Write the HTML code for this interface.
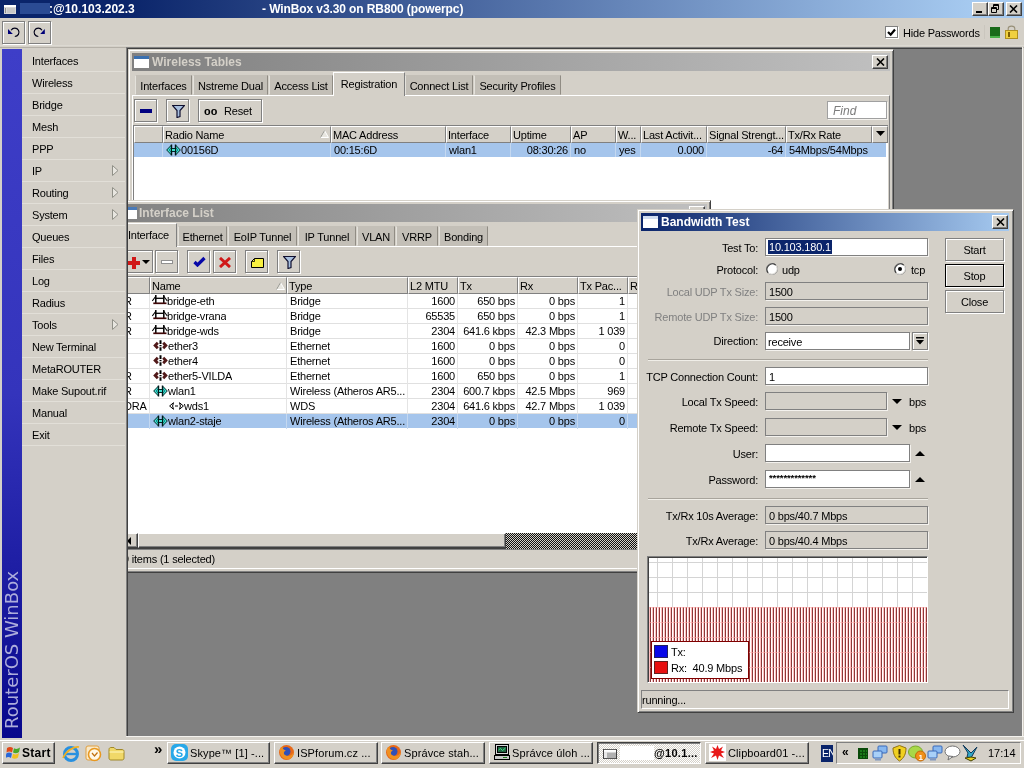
<!DOCTYPE html><html><head><meta charset="utf-8"><title>WinBox</title><style>
*{box-sizing:border-box;margin:0;padding:0}
html,body{width:1024px;height:768px;overflow:hidden}
body{position:relative;background:#d4d0c8;font-family:"Liberation Sans",sans-serif;font-size:11px;letter-spacing:-0.2px;color:#000;line-height:14px}
.a{position:absolute}
.t{position:absolute;white-space:nowrap;line-height:14px;height:14px}
.b{font-weight:bold}
.btn{position:absolute;background:#d4d0c8;border:1px solid #808080;box-shadow:inset 1px 1px 0 #fff,1px 1px 0 #fff}
.btn2{position:absolute;background:#d4d0c8;border:1px solid;border-color:#fff #404040 #404040 #fff;box-shadow:inset -1px -1px 0 #808080}
.tb{position:absolute;background:#d4d0c8;border:1px solid #808080;box-shadow:inset 1px 1px 0 #fff,1px 1px 0 #fff}
.win{position:absolute;background:#d4d0c8;border:1px solid;border-color:#d4d0c8 #404040 #404040 #d4d0c8;box-shadow:inset 1px 1px 0 #fff,inset -1px -1px 0 #808080}
.ttl{position:absolute;height:18px;color:#fff;font-weight:bold;font-size:12px;letter-spacing:0}
.ttl.act{background:linear-gradient(to right,#0a246a,#a6caf0)}
.ttl.ina{background:linear-gradient(to right,#808080,#c0c0c0);color:#d4d0c8}
.sunk{position:absolute;border:1px solid;border-color:#808080 #fff #fff #808080;box-shadow:inset 1px 1px 0 #404040,inset -1px -1px 0 #d4d0c8;background:#fff}
.fld{position:absolute;border:1px solid #808080;background:#fff;box-shadow:1px 1px 0 #f4f2ee}
.fld.dis{background:#d4d0c8}
.tab{position:absolute;background:#c3bfb7;border:1px solid;border-color:#c3bfb7 #908c84 transparent #e4e2dc;text-align:center;line-height:20px}
.tab.on{background:#d4d0c8;border-color:#fff #808080 transparent #fff;border-bottom:none;line-height:22px}
.hd{position:absolute;background:#d4d0c8;border:1px solid;border-color:#fff #808080 #808080 #fff;height:17px;line-height:16px;padding-left:1px;white-space:nowrap;overflow:hidden}
.row{position:absolute;height:15px;border-bottom:1px solid #e0e0e0;background:#fff}
.row.sel{background:#a5c5ec;border-bottom-color:#fff;height:15px}
.c{position:absolute;top:0px;height:14px;line-height:14px;white-space:nowrap;overflow:hidden}
.r{text-align:right}
.vl{position:absolute;width:1px;background:#e4e4e4}
.mi{position:absolute;left:22px;width:103px;height:22px;border-bottom:1px solid #e2dfd8;line-height:23px;padding-left:10px}
.arr{position:absolute;left:90px;top:5px}
.lbl{position:absolute;text-align:right;white-space:nowrap;height:14px;line-height:14px}
.gray{color:#808080}
.tsk{position:absolute;top:742px;height:22px;background:#d4d0c8;border:1px solid;border-color:#fff #404040 #404040 #fff;box-shadow:inset -1px -1px 0 #808080;font-size:11px;letter-spacing:0.1px;line-height:19px;white-space:nowrap;overflow:hidden}
</style></head><body><div id="root" style="position:absolute;left:0;top:0;width:1024px;height:768px;will-change:transform"><div class="a" style="left:0;top:0;width:1024px;height:18px;background:linear-gradient(to right,#0a246a 0%,#0a246a 12%,#a6caf0 95%)"></div><svg class="a" style="left:4px;top:5px" width="12" height="9" viewBox="0 0 12 9"><rect x="0" y="0" width="12" height="9" fill="#d8d8d8"/><rect x="0" y="0" width="12" height="2" fill="#fff"/><rect x="3" y="3" width="8" height="5" fill="#c8c8c8"/><rect x="1" y="3" width="1" height="5" fill="#909090"/></svg><div class="a" style="left:20px;top:3px;width:30px;height:11px;background:#2b4b93"></div><div class="t b" style="left:49px;top:2px;font-size:12px;letter-spacing:0;color:#fff">:@10.103.202.3</div><div class="t b" style="left:262px;top:2px;font-size:12px;letter-spacing:-0.1px;color:#fff">- WinBox v3.30 on RB800 (powerpc)</div><div class="btn2" style="left:972px;top:2px;width:16px;height:14px"><div class="a" style="left:3px;top:8px;width:6px;height:2px;background:#000"></div></div><div class="btn2" style="left:988px;top:2px;width:16px;height:14px"><svg class="a" style="left:2px;top:1px" width="10" height="10" viewBox="0 0 10 10"><path d="M2.500,3V0.5H7.500V5.500H6M2.500,1.500H7.500" stroke="#000" fill="none"/><path d="M0.5,3.500H5.500V8.500H0.5ZM0.5,4.500H5.500" stroke="#000" fill="none"/></svg></div><div class="btn2" style="left:1006px;top:2px;width:16px;height:14px"><svg class="a" style="left:2px;top:2px" width="9" height="8" viewBox="0 0 9 8"><path d="M1,0.5L8,7.5M8,0.5L1,7.5" stroke="#000" stroke-width="1.6" fill="none"/></svg></div><div class="btn" style="left:2px;top:21px;width:23px;height:23px"><svg class="a" style="left:3px;top:4px" width="16" height="14" viewBox="0 0 16 14"><path d="M5.160,4.200A4.200,4.200 0 1 1 8.800,10.500" stroke="#000018" stroke-width="1.200" fill="none"/><path d="M2,3V8H6.800Z" fill="#000078"/></svg></div><div class="btn" style="left:28px;top:21px;width:23px;height:23px"><svg class="a" style="left:3px;top:4px" width="16" height="14" viewBox="0 0 16 14"><path d="M9.940,4.200A4.200,4.200 0 1 0 6.300,10.500" stroke="#000018" stroke-width="1.200" fill="none"/><path d="M12.800,3V8H8.200Z" fill="#000078"/></svg></div><div class="a" style="left:885px;top:26px;width:13px;height:12px;background:#fff;border:1px solid #808080;box-shadow:1px 1px 0 #fff"><svg class="a" style="left:1px;top:1px" width="9" height="9" viewBox="0 0 9 9"><path d="M1,4L3.700,6.700L8,1.500" stroke="#000" stroke-width="2.200" fill="none"/></svg></div><div class="t" style="left:903px;top:26px">Hide Passwords</div><div class="a" style="left:984px;top:25px;width:1px;height:14px;background:#cac6be"></div><div class="a" style="left:990px;top:27px;width:10px;height:11px;background:#1a6a1a;border-bottom:2px solid #4ab04a"></div><svg class="a" style="left:1005px;top:24px" width="13" height="15" viewBox="0 0 13 15"><path d="M3.200,7V4.500C3.200,1.300 9.800,1.300 9.800,4.500V7" stroke="#989078" stroke-width="1.100" fill="none"/><rect x="0.5" y="6.500" width="12" height="8" fill="#f0d040" stroke="#b09020"/><rect x="3" y="8" width="2" height="5" fill="#806000"/></svg><div class="a" style="left:0;top:45px;width:1024px;height:1px;background:#dcd9d2"></div><div class="a" style="left:0;top:47px;width:1024px;height:1px;background:#b4b0a8"></div><div class="a" style="left:2px;top:49px;width:20px;height:689px;background:linear-gradient(to bottom,#3e3ec8 0%,#3434bc 50%,#08088c 100%)"></div><div class="a" style="left:2px;top:727px;width:20px;height:1px"></div><div class="a" style="left:1px;top:729px;width:22px;height:160px;transform:rotate(-90deg);transform-origin:0 0;font-family:'DejaVu Sans',sans-serif;font-size:18px;letter-spacing:0;line-height:22px;color:#adaddc;white-space:nowrap">RouterOS WinBox</div><div class="mi" style="top:50px">Interfaces</div><div class="mi" style="top:72px">Wireless</div><div class="mi" style="top:94px">Bridge</div><div class="mi" style="top:116px">Mesh</div><div class="mi" style="top:138px">PPP</div><div class="mi" style="top:160px">IP<svg class="arr" width="7" height="11" viewBox="0 0 7 11"><path d="M0.5,0.5V10.500L6,5.500Z" fill="#e8e6e0" stroke="#909088"/></svg></div><div class="mi" style="top:182px">Routing<svg class="arr" width="7" height="11" viewBox="0 0 7 11"><path d="M0.5,0.5V10.500L6,5.500Z" fill="#e8e6e0" stroke="#909088"/></svg></div><div class="mi" style="top:204px">System<svg class="arr" width="7" height="11" viewBox="0 0 7 11"><path d="M0.5,0.5V10.500L6,5.500Z" fill="#e8e6e0" stroke="#909088"/></svg></div><div class="mi" style="top:226px">Queues</div><div class="mi" style="top:248px">Files</div><div class="mi" style="top:270px">Log</div><div class="mi" style="top:292px">Radius</div><div class="mi" style="top:314px">Tools<svg class="arr" width="7" height="11" viewBox="0 0 7 11"><path d="M0.5,0.5V10.500L6,5.500Z" fill="#e8e6e0" stroke="#909088"/></svg></div><div class="mi" style="top:336px">New Terminal</div><div class="mi" style="top:358px">MetaROUTER</div><div class="mi" style="top:380px">Make Supout.rif</div><div class="mi" style="top:402px">Manual</div><div class="mi" style="top:424px">Exit</div><div class="a" id="mdi" style="left:126px;top:47px;width:896px;height:689px;background:#808080;border-left:1px solid #808080;border-top:1px solid #808080;overflow:hidden;box-shadow:inset 1px 1px 0 #404040"></div><div class="a" style="left:128px;top:49px;width:894px;height:687px;overflow:hidden"><div class="win" style="left:0px;top:0px;width:766px;height:300px"><div class="ttl ina" style="left:3px;top:3px;width:758px"><svg class="a" style="left:1.500px;top:2.500px" width="15" height="12" viewBox="0 0 15 12"><rect x="0" y="0" width="15" height="12" fill="#fff"/><rect x="0" y="0" width="15" height="3" fill="#3a70b0"/></svg><div class="t" style="left:20px;top:2px">Wireless Tables</div></div><div class="btn2" style="left:743px;top:5px;width:16px;height:14px"><svg class="a" style="left:3px;top:2px" width="9" height="8" viewBox="0 0 9 8"><path d="M1,0.5L8,7.5M8,0.5L1,7.5" stroke="#000" stroke-width="1.6" fill="none"/></svg></div><div class="a" style="left:3px;top:45px;width:758px;height:210px;border:1px solid;border-color:#fff #808080 #808080 #fff"></div><div class="tab" style="left:6px;top:25px;width:57px;height:20px">Interfaces</div><div class="tab" style="left:64px;top:25px;width:75px;height:20px">Nstreme Dual</div><div class="tab" style="left:140px;top:25px;width:64px;height:20px">Access List</div><div class="tab on" style="left:204px;top:22px;width:72px;height:24px">Registration</div><div class="tab" style="left:276px;top:25px;width:68px;height:20px">Connect List</div><div class="tab" style="left:345px;top:25px;width:87px;height:20px">Security Profiles</div><div class="tb" style="left:5px;top:49px;width:23px;height:23px"><div class="a" style="left:5px;top:9px;width:12px;height:4px;background:#000080"></div></div><div class="tb" style="left:37px;top:49px;width:23px;height:23px"><svg class="a" style="left:5px;top:4px" width="13" height="14" viewBox="0 0 13 14"><path d="M0.5,1.500H12.500L8,6.500V12.500L5,13.500V6.500Z" fill="#a8c0e0" stroke="#101030" stroke-width="1.2"/></svg></div><div class="tb" style="left:69px;top:49px;width:64px;height:23px"><div class="t b" style="left:5px;top:5px;font-size:9.5px;letter-spacing:0;transform:scaleX(1.27);transform-origin:0 0">00</div><div class="t" style="left:25px;top:4px">Reset</div></div><div class="fld" style="left:698px;top:51px;width:60px;height:18px;border-color:#a0a0a0"><div class="t" style="left:5px;top:2px;font-style:italic;color:#7c7c7c;font-size:12px;letter-spacing:0">Find</div></div><div class="a" style="left:4px;top:75px;width:755px;height:170px;background:#fff;border-left:1px solid #808080;border-top:1px solid #808080"></div><div class="hd" style="left:5px;top:76px;width:29px"></div><div class="hd" style="left:34px;top:76px;width:168px">Radio Name</div><div class="hd" style="left:202px;top:76px;width:115px">MAC Address</div><div class="hd" style="left:317px;top:76px;width:65px">Interface</div><div class="hd" style="left:382px;top:76px;width:60px">Uptime</div><div class="hd" style="left:442px;top:76px;width:45px">AP</div><div class="hd" style="left:487px;top:76px;width:25px">W...</div><div class="hd" style="left:512px;top:76px;width:66px">Last Activit...</div><div class="hd" style="left:578px;top:76px;width:79px">Signal Strengt...</div><div class="hd" style="left:657px;top:76px;width:86px">Tx/Rx Rate</div><div class="hd" style="left:743px;top:76px;width:16px;padding:0"><svg class="a" style="left:3px;top:4px" width="9" height="5" viewBox="0 0 9 5"><path d="M0,0H9L4.500,5Z" fill="#000"/></svg></div><svg class="a" style="left:191px;top:80px" width="9" height="8" viewBox="0 0 9 8"><path d="M0.5,7.500H8.500L4.500,0.5Z" fill="#e8e6e0" stroke="#fff"/><path d="M0.5,7.500L4.500,0.5" stroke="#909088" fill="none"/></svg><div class="row sel" style="left:5px;top:93px;width:752px"><svg class="a" style="left:32px;top:1px" width="15" height="13" viewBox="0 0 15 13"><path d="M0.7,6L5.500,1V11Z" fill="#40e0d0" stroke="#002828" stroke-width="1"/><path d="M14.300,6L9.500,1V11Z" fill="#40e0d0" stroke="#002828" stroke-width="1"/><path d="M3,6L5,4M3,6L5,8M12,6L10,4M12,6L10,8" stroke="#008080" stroke-width="0.8" fill="none"/><path d="M5.500,0.5V11.500M9.500,0.5V11.500" stroke="#001818" stroke-width="1.400"/><rect x="6" y="5" width="3" height="2" fill="#40e0d0"/><path d="M6,4.500H9M6,7.500H9" stroke="#002828" stroke-width="1"/></svg><div class="c" style="left:47px">00156D</div><div class="c" style="left:200px">00:15:6D</div><div class="c" style="left:315px">wlan1</div><div class="c r" style="left:378px;width:56px">08:30:26</div><div class="c" style="left:440px">no</div><div class="c" style="left:485px">yes</div><div class="c r" style="left:508px;width:62px">0.000</div><div class="c r" style="left:574px;width:75px">-64</div><div class="c" style="left:655px">54Mbps/54Mbps</div></div><div class="vl" style="left:33px;top:93px;height:14px;background:#c4d8f0"></div><div class="vl" style="left:201px;top:93px;height:14px;background:#c4d8f0"></div><div class="vl" style="left:316px;top:93px;height:14px;background:#c4d8f0"></div><div class="vl" style="left:381px;top:93px;height:14px;background:#c4d8f0"></div><div class="vl" style="left:441px;top:93px;height:14px;background:#c4d8f0"></div><div class="vl" style="left:486px;top:93px;height:14px;background:#c4d8f0"></div><div class="vl" style="left:511px;top:93px;height:14px;background:#c4d8f0"></div><div class="vl" style="left:577px;top:93px;height:14px;background:#c4d8f0"></div><div class="vl" style="left:656px;top:93px;height:14px;background:#c4d8f0"></div></div><div class="win" style="left:-28px;top:151px;width:611px;height:373px"><div class="ttl ina" style="left:3px;top:3px;width:603px"><svg class="a" style="left:18px;top:3px" width="15" height="12" viewBox="0 0 15 12"><rect x="0" y="0" width="15" height="12" fill="#fff"/><rect x="0" y="0" width="15" height="3" fill="#4a7ab8"/></svg><div class="t" style="left:35px;top:2px">Interface List</div></div><div class="btn2" style="left:588px;top:5px;width:16px;height:14px"><svg class="a" style="left:3px;top:2px" width="9" height="8" viewBox="0 0 9 8"><path d="M1,0.5L8,7.5M8,0.5L1,7.5" stroke="#000" stroke-width="1.6" fill="none"/></svg></div><div class="a" style="left:3px;top:45px;width:603px;height:304px;border:1px solid;border-color:#fff #808080 #808080 #fff"></div><div class="tab on" style="left:19px;top:22px;width:57px;height:24px;text-align:right;padding-right:7px">Interface</div><div class="tab" style="left:77px;top:25px;width:49px;height:20px">Ethernet</div><div class="tab" style="left:127px;top:25px;width:69px;height:20px">EoIP Tunnel</div><div class="tab" style="left:197px;top:25px;width:58px;height:20px">IP Tunnel</div><div class="tab" style="left:256px;top:25px;width:38px;height:20px">VLAN</div><div class="tab" style="left:295px;top:25px;width:42px;height:20px">VRRP</div><div class="tab" style="left:338px;top:25px;width:49px;height:20px">Bonding</div><div class="tb" style="left:21px;top:49px;width:31px;height:23px"><svg class="a" style="left:5px;top:6px" width="12" height="12" viewBox="0 0 12 12"><path d="M6,0V12M0,6H12" stroke="#d01818" stroke-width="4"/></svg><svg class="a" style="left:19px;top:9px" width="8" height="4" viewBox="0 0 8 4"><path d="M0,0H8L4,4Z" fill="#000"/></svg></div><div class="tb" style="left:54px;top:49px;width:23px;height:23px"><div class="a" style="left:5px;top:9px;width:12px;height:4px;background:#fff;border:1px solid #909090"></div></div><div class="tb" style="left:86px;top:49px;width:23px;height:23px"><svg class="a" style="left:5px;top:5px" width="13" height="11" viewBox="0 0 13 11"><path d="M1.500,6L4.500,9L11.500,2" stroke="#0808a8" stroke-width="3.2" fill="none"/></svg></div><div class="tb" style="left:112px;top:49px;width:23px;height:23px"><svg class="a" style="left:5px;top:6px" width="12" height="11" viewBox="0 0 12 11"><path d="M1,1L11,10M11,1L1,10" stroke="#d01818" stroke-width="3" fill="none"/></svg></div><div class="tb" style="left:144px;top:49px;width:23px;height:23px"><svg class="a" style="left:5px;top:7px" width="13" height="10" viewBox="0 0 13 10"><path d="M3.500,0.5H12.500V9.500H0.5V3.500Z" fill="#f8f040" stroke="#000"/><path d="M3.500,0.5V3.500H0.5" fill="none" stroke="#000" stroke-width="0.8"/></svg></div><div class="tb" style="left:176px;top:49px;width:23px;height:23px"><svg class="a" style="left:5px;top:4px" width="13" height="14" viewBox="0 0 13 14"><path d="M0.5,1.500H12.500L8,6.500V12.500L5,13.500V6.500Z" fill="#a8c0e0" stroke="#101030" stroke-width="1.2"/></svg></div><div class="a" style="left:4px;top:75px;width:601px;height:257px;background:#fff;border-top:1px solid #808080"></div><div class="hd" style="left:5px;top:76px;width:44px"></div><div class="hd" style="left:49px;top:76px;width:137px">Name</div><div class="hd" style="left:186px;top:76px;width:121px">Type</div><div class="hd" style="left:307px;top:76px;width:50px">L2 MTU</div><div class="hd" style="left:357px;top:76px;width:60px">Tx</div><div class="hd" style="left:417px;top:76px;width:60px">Rx</div><div class="hd" style="left:477px;top:76px;width:50px">Tx Pac...</div><div class="hd" style="left:527px;top:76px;width:72px">R</div><svg class="a" style="left:175px;top:81px" width="9" height="8" viewBox="0 0 9 8"><path d="M0.5,7.500H8.500L4.500,0.5Z" fill="#e8e6e0" stroke="#fff"/><path d="M0.5,7.500L4.500,0.5" stroke="#909088" fill="none"/></svg><div class="row" style="left:4px;top:93px;width:601px"><div class="c" style="left:19px">R</div><svg class="a" style="left:47px;top:1px" width="16" height="11" viewBox="0 0 16 11"><path d="M3.800,0V8.500M11.800,0V8.500" stroke="#000" stroke-width="1.500" fill="none"/><path d="M3.800,1.200L0.3,6M11.800,1.200L15.300,6" stroke="#000" stroke-width="1.100" fill="none"/><path d="M3.800,3.300H11.800" stroke="#000" stroke-width="1.300"/><path d="M1.300,8.300H14.500" stroke="#400808" stroke-width="1.700"/></svg><div class="c" style="left:62px">bridge-eth</div><div class="c" style="left:185px">Bridge</div><div class="c r" style="left:304px;width:46px">1600</div><div class="c r" style="left:354px;width:56px">650 bps</div><div class="c r" style="left:414px;width:56px">0 bps</div><div class="c r" style="left:474px;width:46px">1</div></div><div class="row" style="left:4px;top:108px;width:601px"><div class="c" style="left:19px">R</div><svg class="a" style="left:47px;top:1px" width="16" height="11" viewBox="0 0 16 11"><path d="M3.800,0V8.500M11.800,0V8.500" stroke="#000" stroke-width="1.500" fill="none"/><path d="M3.800,1.200L0.3,6M11.800,1.200L15.300,6" stroke="#000" stroke-width="1.100" fill="none"/><path d="M3.800,3.300H11.800" stroke="#000" stroke-width="1.300"/><path d="M1.300,8.300H14.500" stroke="#400808" stroke-width="1.700"/></svg><div class="c" style="left:62px">bridge-vrana</div><div class="c" style="left:185px">Bridge</div><div class="c r" style="left:304px;width:46px">65535</div><div class="c r" style="left:354px;width:56px">650 bps</div><div class="c r" style="left:414px;width:56px">0 bps</div><div class="c r" style="left:474px;width:46px">1</div></div><div class="row" style="left:4px;top:123px;width:601px"><div class="c" style="left:19px">R</div><svg class="a" style="left:47px;top:1px" width="16" height="11" viewBox="0 0 16 11"><path d="M3.800,0V8.500M11.800,0V8.500" stroke="#000" stroke-width="1.500" fill="none"/><path d="M3.800,1.200L0.3,6M11.800,1.200L15.300,6" stroke="#000" stroke-width="1.100" fill="none"/><path d="M3.800,3.300H11.800" stroke="#000" stroke-width="1.300"/><path d="M1.300,8.300H14.500" stroke="#400808" stroke-width="1.700"/></svg><div class="c" style="left:62px">bridge-wds</div><div class="c" style="left:185px">Bridge</div><div class="c r" style="left:304px;width:46px">2304</div><div class="c r" style="left:354px;width:56px">641.6 kbps</div><div class="c r" style="left:414px;width:56px">42.3 Mbps</div><div class="c r" style="left:474px;width:46px">1 039</div></div><div class="row" style="left:4px;top:138px;width:601px"><div class="c" style="left:19px"></div><svg class="a" style="left:48px;top:1px" width="15" height="12" viewBox="0 0 15 12"><path d="M0.2,5.500L3.800,1.800L5.800,3.700L4.200,5.500L5.800,7.300L3.800,9.200Z" fill="#501818"/><path d="M14.800,5.500L11.200,1.800L9.200,3.700L10.800,5.500L9.200,7.300L11.200,9.200Z" fill="#501818"/><path d="M7.500,0.2V4M7.500,5V6.200M7.500,7.200V10.700" stroke="#000" stroke-width="2"/></svg><div class="c" style="left:63px">ether3</div><div class="c" style="left:185px">Ethernet</div><div class="c r" style="left:304px;width:46px">1600</div><div class="c r" style="left:354px;width:56px">0 bps</div><div class="c r" style="left:414px;width:56px">0 bps</div><div class="c r" style="left:474px;width:46px">0</div></div><div class="row" style="left:4px;top:153px;width:601px"><div class="c" style="left:19px"></div><svg class="a" style="left:48px;top:1px" width="15" height="12" viewBox="0 0 15 12"><path d="M0.2,5.500L3.800,1.800L5.800,3.700L4.200,5.500L5.800,7.300L3.800,9.200Z" fill="#501818"/><path d="M14.800,5.500L11.200,1.800L9.200,3.700L10.800,5.500L9.200,7.300L11.200,9.200Z" fill="#501818"/><path d="M7.500,0.2V4M7.500,5V6.200M7.500,7.200V10.700" stroke="#000" stroke-width="2"/></svg><div class="c" style="left:63px">ether4</div><div class="c" style="left:185px">Ethernet</div><div class="c r" style="left:304px;width:46px">1600</div><div class="c r" style="left:354px;width:56px">0 bps</div><div class="c r" style="left:414px;width:56px">0 bps</div><div class="c r" style="left:474px;width:46px">0</div></div><div class="row" style="left:4px;top:168px;width:601px"><div class="c" style="left:19px">R</div><svg class="a" style="left:48px;top:1px" width="15" height="12" viewBox="0 0 15 12"><path d="M0.2,5.500L3.800,1.800L5.800,3.700L4.200,5.500L5.800,7.300L3.800,9.200Z" fill="#501818"/><path d="M14.800,5.500L11.200,1.800L9.200,3.700L10.800,5.500L9.200,7.300L11.200,9.200Z" fill="#501818"/><path d="M7.500,0.2V4M7.500,5V6.200M7.500,7.200V10.700" stroke="#000" stroke-width="2"/></svg><div class="c" style="left:63px">ether5-VILDA</div><div class="c" style="left:185px">Ethernet</div><div class="c r" style="left:304px;width:46px">1600</div><div class="c r" style="left:354px;width:56px">650 bps</div><div class="c r" style="left:414px;width:56px">0 bps</div><div class="c r" style="left:474px;width:46px">1</div></div><div class="row" style="left:4px;top:183px;width:601px"><div class="c" style="left:19px">R</div><svg class="a" style="left:48px;top:1px" width="15" height="13" viewBox="0 0 15 13"><path d="M0.7,6L5.500,1V11Z" fill="#40e0d0" stroke="#002828" stroke-width="1"/><path d="M14.300,6L9.500,1V11Z" fill="#40e0d0" stroke="#002828" stroke-width="1"/><path d="M3,6L5,4M3,6L5,8M12,6L10,4M12,6L10,8" stroke="#008080" stroke-width="0.8" fill="none"/><path d="M5.500,0.5V11.500M9.500,0.5V11.500" stroke="#001818" stroke-width="1.400"/><rect x="6" y="5" width="3" height="2" fill="#40e0d0"/><path d="M6,4.500H9M6,7.500H9" stroke="#002828" stroke-width="1"/></svg><div class="c" style="left:63px">wlan1</div><div class="c" style="left:185px">Wireless (Atheros AR5...</div><div class="c r" style="left:304px;width:46px">2304</div><div class="c r" style="left:354px;width:56px">600.7 kbps</div><div class="c r" style="left:414px;width:56px">42.5 Mbps</div><div class="c r" style="left:474px;width:46px">969</div></div><div class="row" style="left:4px;top:198px;width:601px"><div class="c" style="left:19px">DRA</div><svg class="a" style="left:64px;top:3px" width="15" height="8" viewBox="0 0 15 8"><path d="M4.500,0.7L0.6,4L4.500,7.300L3.600,4Z" fill="#fff" stroke="#000" stroke-width="1"/><path d="M10.500,0.7L14.400,4L10.500,7.300L11.400,4Z" fill="#fff" stroke="#000" stroke-width="1"/><path d="M6,4H9" stroke="#000" stroke-width="1"/></svg><div class="c" style="left:79px">wds1</div><div class="c" style="left:185px">WDS</div><div class="c r" style="left:304px;width:46px">2304</div><div class="c r" style="left:354px;width:56px">641.6 kbps</div><div class="c r" style="left:414px;width:56px">42.7 Mbps</div><div class="c r" style="left:474px;width:46px">1 039</div></div><div class="row sel" style="left:4px;top:213px;width:601px"><div class="c" style="left:19px"></div><svg class="a" style="left:48px;top:1px" width="15" height="13" viewBox="0 0 15 13"><path d="M0.7,6L5.500,1V11Z" fill="#40e0d0" stroke="#002828" stroke-width="1"/><path d="M14.300,6L9.500,1V11Z" fill="#40e0d0" stroke="#002828" stroke-width="1"/><path d="M3,6L5,4M3,6L5,8M12,6L10,4M12,6L10,8" stroke="#008080" stroke-width="0.8" fill="none"/><path d="M5.500,0.5V11.500M9.500,0.5V11.500" stroke="#001818" stroke-width="1.400"/><rect x="6" y="5" width="3" height="2" fill="#40e0d0"/><path d="M6,4.500H9M6,7.500H9" stroke="#002828" stroke-width="1"/></svg><div class="c" style="left:63px">wlan2-staje</div><div class="c" style="left:185px">Wireless (Atheros AR5...</div><div class="c r" style="left:304px;width:46px">2304</div><div class="c r" style="left:354px;width:56px">0 bps</div><div class="c r" style="left:414px;width:56px">0 bps</div><div class="c r" style="left:474px;width:46px">0</div></div><div class="vl" style="left:48px;top:93px;height:120px"></div><div class="vl" style="left:48px;top:213px;height:15px;background:#c4d8f0"></div><div class="vl" style="left:185px;top:93px;height:120px"></div><div class="vl" style="left:185px;top:213px;height:15px;background:#c4d8f0"></div><div class="vl" style="left:306px;top:93px;height:120px"></div><div class="vl" style="left:306px;top:213px;height:15px;background:#c4d8f0"></div><div class="vl" style="left:356px;top:93px;height:120px"></div><div class="vl" style="left:356px;top:213px;height:15px;background:#c4d8f0"></div><div class="vl" style="left:416px;top:93px;height:120px"></div><div class="vl" style="left:416px;top:213px;height:15px;background:#c4d8f0"></div><div class="vl" style="left:476px;top:93px;height:120px"></div><div class="vl" style="left:476px;top:213px;height:15px;background:#c4d8f0"></div><div class="vl" style="left:526px;top:93px;height:120px"></div><div class="vl" style="left:526px;top:213px;height:15px;background:#c4d8f0"></div><div class="a" style="left:4px;top:332px;width:601px;height:16px;background:repeating-conic-gradient(#101010 0% 25%,#d4d0c8 0% 50%) 0 0/2px 2px"></div><div class="btn2" style="left:21px;top:332px;width:16px;height:15px"><svg class="a" style="left:4px;top:3px" width="4" height="8" viewBox="0 0 4 8"><path d="M4,0V8L0,4Z" fill="#000"/></svg></div><div class="btn2" style="left:37px;top:332px;width:368px;height:15px"></div><div class="a" style="left:4px;top:347px;width:401px;height:1px;background:#404040"></div><div class="a" style="left:3px;top:367px;width:603px;height:1px;background:#fff"></div><div class="t" style="left:22px;top:351px">9 items (1 selected)</div></div><div class="win" style="left:509px;top:160px;width:377px;height:504px"><div class="ttl act" style="left:3px;top:3px;width:368px"><svg class="a" style="left:2px;top:3px" width="15" height="12" viewBox="0 0 15 12"><rect x="0" y="0" width="15" height="12" fill="#fff"/><rect x="0" y="0" width="15" height="3" fill="#d0dcf0"/></svg><div class="t" style="left:20px;top:2px">Bandwidth Test</div></div><div class="btn2" style="left:354px;top:5px;width:16px;height:14px"><svg class="a" style="left:3px;top:2px" width="9" height="8" viewBox="0 0 9 8"><path d="M1,0.5L8,7.500M8,0.5L1,7.500" stroke="#000" stroke-width="1.600" fill="none"/></svg></div><div class="lbl" style="left:2px;top:31px;width:118px">Test To:</div><div class="fld" style="left:127px;top:28px;width:163px;height:18px"><div class="t" style="left:2px;top:1px;height:14px;line-height:15px;background:#0a246a;color:#fff;padding:0 1px">10.103.180.1</div></div><div class="lbl" style="left:2px;top:53px;width:118px">Protocol:</div><svg class="a" style="left:128px;top:53px" width="12" height="12" viewBox="0 0 12 12"><circle cx="6" cy="6" r="5.500" fill="#fff" stroke="#808080"/><path d="M2.200,9.800A5.400,5.400 0 0 1 9.800,2.200" stroke="#404040" fill="none" stroke-width="1.2"/><path d="M9.800,2.200A5.400,5.400 0 0 1 2.200,9.800" stroke="#e8e6e0" fill="none" stroke-width="1"/></svg><div class="t" style="left:144px;top:53px">udp</div><svg class="a" style="left:256px;top:53px" width="12" height="12" viewBox="0 0 12 12"><circle cx="6" cy="6" r="5.500" fill="#fff" stroke="#808080"/><path d="M2.200,9.800A5.400,5.400 0 0 1 9.800,2.200" stroke="#404040" fill="none" stroke-width="1.2"/><path d="M9.800,2.200A5.400,5.400 0 0 1 2.200,9.800" stroke="#e8e6e0" fill="none" stroke-width="1"/><circle cx="6" cy="6" r="2" fill="#000"/></svg><div class="t" style="left:273px;top:53px">tcp</div><div class="lbl gray" style="left:2px;top:75px;width:118px">Local UDP Tx Size:</div><div class="fld dis" style="left:127px;top:72px;width:163px;height:18px"><div class="t" style="left:3px;top:2px">1500</div></div><div class="lbl gray" style="left:2px;top:100px;width:118px">Remote UDP Tx Size:</div><div class="fld dis" style="left:127px;top:97px;width:163px;height:18px"><div class="t" style="left:3px;top:2px">1500</div></div><div class="lbl" style="left:2px;top:124px;width:118px">Direction:</div><div class="fld" style="left:127px;top:122px;width:145px;height:18px"><div class="t" style="left:2px;top:2px">receive</div></div><div class="tb" style="left:274px;top:122px;width:16px;height:18px"><svg class="a" style="left:3px;top:4px" width="8" height="8" viewBox="0 0 8 8"><path d="M0,0H8V1.500H0ZM0,3H8L4,7.500Z" fill="#000"/></svg></div><div class="a" style="left:10px;top:149px;width:280px;height:2px;border-top:1px solid #a8a49c;border-bottom:1px solid #f0eee8"></div><div class="lbl" style="left:2px;top:160px;width:118px">TCP Connection Count:</div><div class="fld" style="left:127px;top:157px;width:163px;height:18px"><div class="t" style="left:3px;top:2px">1</div></div><div class="lbl" style="left:2px;top:185px;width:118px">Local Tx Speed:</div><div class="fld dis" style="left:127px;top:182px;width:122px;height:18px"></div><div class="lbl" style="left:2px;top:211px;width:118px">Remote Tx Speed:</div><div class="fld dis" style="left:127px;top:208px;width:122px;height:18px"></div><svg class="a" style="left:254px;top:189px" width="10" height="5" viewBox="0 0 10 5"><path d="M0,0H10L5,5Z" fill="#000"/></svg><div class="t" style="left:271px;top:185px">bps</div><svg class="a" style="left:254px;top:215px" width="10" height="5" viewBox="0 0 10 5"><path d="M0,0H10L5,5Z" fill="#000"/></svg><div class="t" style="left:271px;top:211px">bps</div><div class="lbl" style="left:2px;top:237px;width:118px">User:</div><div class="fld" style="left:127px;top:234px;width:145px;height:18px"></div><div class="lbl" style="left:2px;top:263px;width:118px">Password:</div><div class="fld" style="left:127px;top:260px;width:145px;height:18px"><div class="t" style="left:3px;top:0px;font-size:9.5px;letter-spacing:-0.1px;font-weight:bold">*************</div></div><svg class="a" style="left:277px;top:241px" width="10" height="5" viewBox="0 0 10 5"><path d="M0,5H10L5,0Z" fill="#000"/></svg><svg class="a" style="left:277px;top:267px" width="10" height="5" viewBox="0 0 10 5"><path d="M0,5H10L5,0Z" fill="#000"/></svg><div class="a" style="left:10px;top:288px;width:280px;height:2px;border-top:1px solid #a8a49c;border-bottom:1px solid #f0eee8"></div><div class="lbl" style="left:2px;top:299px;width:118px">Tx/Rx 10s Average:</div><div class="fld dis" style="left:127px;top:296px;width:163px;height:18px"><div class="t" style="left:3px;top:2px">0 bps/40.7 Mbps</div></div><div class="lbl" style="left:2px;top:324px;width:118px">Tx/Rx Average:</div><div class="fld dis" style="left:127px;top:321px;width:163px;height:18px"><div class="t" style="left:3px;top:2px">0 bps/40.4 Mbps</div></div><div class="a" style="left:307px;top:28px;width:59px;height:23px;border:1px solid #808080;box-shadow:inset 1px 1px 0 #fff,1px 1px 0 #fff;text-align:center;line-height:22px">Start</div><div class="a" style="left:307px;top:54px;width:59px;height:23px;border:1px solid #000;box-shadow:inset 1px 1px 0 #fff,1px 1px 0 #fff;text-align:center;line-height:22px">Stop</div><div class="a" style="left:307px;top:80px;width:59px;height:23px;border:1px solid #808080;box-shadow:inset 1px 1px 0 #fff,1px 1px 0 #fff;text-align:center;line-height:22px">Close</div><div class="a" style="left:9px;top:346px;width:281px;height:127px;border:1px solid;border-color:#808080 #fff #fff #808080;box-shadow:inset 1px 1px 0 #404040;background:#fff;overflow:hidden"><div class="a" style="left:1px;top:1px;width:279px;height:125px;background-image:linear-gradient(to right,#d4d4d4 1px,transparent 1px),linear-gradient(to bottom,#d4d4d4 1px,transparent 1px);background-size:15px 15px;background-position:8px 4px"></div><div class="a" style="left:1px;top:50px;width:279px;height:75px;background:linear-gradient(to bottom,rgba(255,170,170,0.55) 1px,transparent 1px) 0 0/15px 15px,repeating-linear-gradient(to right,#ffc0c0 0,#ffc0c0 1px,#8c3838 1px,#8c3838 2px,#fff 2px,#fff 3px)"></div><div class="a" style="left:3px;top:84px;width:98px;height:38px;background:#fff;border:1px solid #800000"><div class="a" style="left:2px;top:3px;width:14px;height:13px;background:#0808e8;border:1px solid #202060"></div><div class="a" style="left:2px;top:19px;width:14px;height:13px;background:#e81010;border:1px solid #602020"></div><div class="t" style="left:19px;top:3px">Tx:</div><div class="t" style="left:19px;top:19px">Rx:&nbsp;&nbsp;40.9 Mbps</div></div></div><div class="a" style="left:3px;top:480px;width:368px;height:19px;border:1px solid;border-color:#808080 #fff #fff #808080"></div><div class="t" style="left:4px;top:483px">running...</div></div></div><div class="a" style="left:126px;top:736px;width:898px;height:1px;background:#f4f2ee"></div><div class="a" style="left:1022px;top:47px;width:1px;height:690px;background:#f4f2ee"></div><div class="a" style="left:0;top:740px;width:1024px;height:1px;background:#fff"></div><div class="tsk" style="left:2px;width:53px"><svg class="a" style="left:3px;top:2px" width="15" height="15" viewBox="0 0 15 15"><path d="M1,3C3,1.500 5,1.500 7,3L6,7.500C4,6 2.500,6 0.5,7.500Z" fill="#e04818"/><path d="M8,3.300C10,4.500 12,4 14,2.500L13,7C11,8.500 9,8.500 7,7.500Z" fill="#48a828"/><path d="M0.3,8.500C2,7 4,7 6,8.500L5,13C3,11.500 1.500,11.500 -0.5,13Z" fill="#2868d8"/><path d="M7,8.700C9,10 11,9.500 13,8L12,12.500C10,14 8,14 6,13Z" fill="#f0c020"/></svg><div class="t b" style="left:19px;top:3px;font-size:12px;letter-spacing:0.3px">Start</div></div><svg class="a" style="left:62px;top:745px" width="18" height="17" viewBox="0 0 18 17"><ellipse cx="9" cy="9" rx="6.500" ry="6.500" fill="none" stroke="#2890e0" stroke-width="3"/><path d="M4,9H14" stroke="#2890e0" stroke-width="2.400"/><path d="M1,13C4,6 12,1 17,2" stroke="#f0b020" stroke-width="1.600" fill="none"/></svg><svg class="a" style="left:85px;top:745px" width="17" height="17" viewBox="0 0 17 17"><rect x="1" y="1" width="13" height="14" rx="2" fill="#f8e8c8" stroke="#e0a040"/><circle cx="9.500" cy="9.500" r="6" fill="#fff8e8" stroke="#e89820" stroke-width="1.600"/><path d="M7,8L9.500,11L12.500,7.500" stroke="#c07010" fill="none" stroke-width="1.200"/></svg><svg class="a" style="left:108px;top:746px" width="17" height="15" viewBox="0 0 17 15"><path d="M1,3.500C1,2 2,1.500 3,1.500H6L8,3.500H14C15,3.500 16,4 16,5.500V12C16,13.500 15,14 14,14H3C2,14 1,13.500 1,12Z" fill="#f0d868" stroke="#a08828"/><path d="M1.500,6H15.500" stroke="#fff8c0"/></svg><div class="t b" style="left:154px;top:742px;font-size:15px;letter-spacing:-0.8px">&raquo;</div><div class="tsk" style="left:167px;width:103px"><svg class="a" style="left:3px;top:1px" width="17" height="17" viewBox="0 0 17 17"><rect x="0" y="0" width="17" height="17" rx="5" fill="#28a8e8"/><circle cx="8.500" cy="8.500" r="6" fill="#fff"/><text x="8.500" y="12.500" text-anchor="middle" font-family="Liberation Sans" font-weight="bold" font-size="11" fill="#28a8e8">S</text></svg><div class="t" style="left:22px;top:3px;line-height:14px">Skype&trade; [1] -...</div></div><div class="tsk" style="left:274px;width:104px"><svg class="a" style="left:3px;top:1px" width="17" height="17" viewBox="0 0 17 17"><circle cx="8.500" cy="8.500" r="7.500" fill="#e86818"/><circle cx="8" cy="7.500" r="4.500" fill="#3050b8"/><path d="M2,5C1,10 4,15 9,15.500C13,15.500 16,12 15.500,8C14,12 10,13 7,11C5,9.500 6,7 8,6.500C5,6 4,4 5,2C3.500,3 2.500,4 2,5Z" fill="#f09020"/></svg><div class="t" style="left:22px;top:3px;line-height:14px">ISPforum.cz ...</div></div><div class="tsk" style="left:381px;width:104px"><svg class="a" style="left:3px;top:1px" width="17" height="17" viewBox="0 0 17 17"><circle cx="8.500" cy="8.500" r="7.500" fill="#e86818"/><circle cx="8" cy="7.500" r="4.500" fill="#3050b8"/><path d="M2,5C1,10 4,15 9,15.500C13,15.500 16,12 15.500,8C14,12 10,13 7,11C5,9.500 6,7 8,6.500C5,6 4,4 5,2C3.500,3 2.500,4 2,5Z" fill="#f09020"/></svg><div class="t" style="left:22px;top:3px;line-height:14px">Spr&aacute;vce stah...</div></div><div class="tsk" style="left:489px;width:104px"><svg class="a" style="left:4px;top:1px" width="16" height="17" viewBox="0 0 16 17"><rect x="1.500" y="0.5" width="13" height="10" fill="#d8d8d8" stroke="#000"/><rect x="3.500" y="2.500" width="9" height="6" fill="#206040" stroke="#000"/><path d="M4.500,6L6.500,4.500L8.500,6.500L11.500,4" stroke="#40e080" fill="none"/><rect x="0.5" y="11.500" width="15" height="4" fill="#c8c8c8" stroke="#000"/><path d="M9,13.500H13" stroke="#208020"/></svg><div class="t" style="left:22px;top:3px;line-height:14px">Spr&aacute;vce &uacute;loh ...</div></div><div class="tsk" style="left:597px;width:104px;border-color:#404040 #fff #fff #404040;box-shadow:inset 1px 1px 0 #808080;background:repeating-conic-gradient(#fff 0% 25%,#d4d0c8 0% 50%) 0 0/2px 2px"><svg class="a" style="left:5px;top:6px" width="14" height="10" viewBox="0 0 14 11" preserveAspectRatio="none"><rect x="0.5" y="0.5" width="13" height="10" fill="#e8e8e8" stroke="#404040"/><rect x="1" y="1" width="12" height="2" fill="#fff"/><rect x="4" y="4" width="9" height="6" fill="#b0b0b0"/></svg><div class="a" style="left:22px;top:3px;width:34px;height:14px;background:#fff"></div><div class="t b" style="left:56px;top:3px;letter-spacing:0.3px">@10.1...</div></div><div class="tsk" style="left:705px;width:104px"><svg class="a" style="left:3px;top:1px" width="17" height="17" viewBox="0 0 17 17"><rect x="0" y="0" width="17" height="17" fill="#fff"/><path d="M8.500,1L10,5L14,2.500L12,6.500L16,8L12,9.500L15,14L10,11.500L8.500,16L7,11.500L2,14L5,9.500L1,8L5,6.500L3,2.500L7,5Z" fill="#e81818"/></svg><div class="t" style="left:22px;top:3px;line-height:14px">Clipboard01 -...</div></div><div class="a" style="left:821px;top:745px;width:12px;height:17px;background:#0a246a;color:#fff;font-size:10.5px;letter-spacing:-0.8px;line-height:17px;overflow:hidden;white-space:nowrap;padding-left:1px">EN</div><div class="a" style="left:836px;top:742px;width:185px;height:22px;border:1px solid;border-color:#808080 #fff #fff #808080"></div><div class="t b" style="left:842px;top:745px;font-size:12px;letter-spacing:-1px">&laquo;</div><div class="a" style="left:858px;top:748px;width:10px;height:11px;background:#1a7a1a;border:1px solid #0a4a0a;background-image:linear-gradient(to right,#0a4a0a 1px,transparent 1px),linear-gradient(to bottom,#0a4a0a 1px,transparent 1px);background-size:3px 3px"></div><svg class="a" style="left:872px;top:745px" width="16" height="16" viewBox="0 0 16 16"><g><rect x="6" y="1" width="9" height="7" rx="1" fill="#88b8f0" stroke="#3868b8"/><rect x="1" y="6" width="9" height="7" rx="1" fill="#a8d0f8" stroke="#3868b8"/><rect x="3" y="14" width="6" height="1.500" fill="#8098c0"/></g></svg><svg class="a" style="left:892px;top:745px" width="15" height="17" viewBox="0 0 15 17"><path d="M7.500,0.5L14,3C14,9 12,13 7.500,16C3,13 1,9 1,3Z" fill="#f0d020" stroke="#907010"/><rect x="6.500" y="4" width="2" height="5.500" fill="#403000"/><rect x="6.500" y="10.500" width="2" height="2" fill="#403000"/></svg><svg class="a" style="left:908px;top:745px" width="19" height="17" viewBox="0 0 19 17"><ellipse cx="7.500" cy="7" rx="7" ry="6" fill="#a8d848" stroke="#78a828"/><circle cx="12.500" cy="11" r="5" fill="#f09018" stroke="#c06808"/><text x="12.500" y="14.500" text-anchor="middle" font-family="Liberation Sans" font-weight="bold" font-size="8" fill="#fff">1</text></svg><svg class="a" style="left:927px;top:745px" width="16" height="16" viewBox="0 0 16 16"><g><rect x="6" y="1" width="9" height="7" rx="1" fill="#88b8f0" stroke="#3868b8"/><rect x="1" y="6" width="9" height="7" rx="1" fill="#a8d0f8" stroke="#3868b8"/><rect x="3" y="14" width="6" height="1.500" fill="#8098c0"/></g></svg><svg class="a" style="left:944px;top:745px" width="17" height="16" viewBox="0 0 17 16"><ellipse cx="8.500" cy="6.500" rx="7.500" ry="5.500" fill="#fff" stroke="#707070"/><path d="M5,11L4,15L9,11.500Z" fill="#fff" stroke="#707070"/></svg><svg class="a" style="left:962px;top:744px" width="17" height="18" viewBox="0 0 17 18"><path d="M1,1L6,9L5,13L9,14L15,3L9,9Z" fill="#30a8c8" stroke="#103858"/><path d="M3,14L9,17L14,14L9,13Z" fill="#e8d020" stroke="#404000"/></svg><div class="t" style="left:988px;top:746px;letter-spacing:0">17:14</div></div></body></html>
